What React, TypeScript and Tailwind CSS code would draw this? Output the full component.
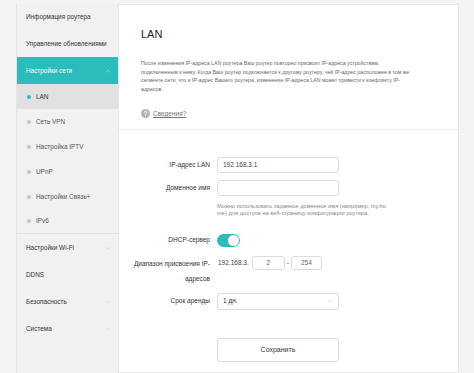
import { ChevronDown, ChevronUp } from 'lucide-react';

const font = { fontFamily: '"Liberation Sans", Arial, sans-serif' };

interface NavItem {
  label: string;
  kind: 'top' | 'open' | 'sub' | 'active';
  chevron?: boolean;
}

const nav: NavItem[] = [
  { label: 'Информация роутера', kind: 'top' },
  { label: 'Управление обновлениями', kind: 'top' },
  { label: 'Настройки сети', kind: 'open', chevron: true },
  { label: 'LAN', kind: 'active' },
  { label: 'Сеть VPN', kind: 'sub' },
  { label: 'Настройка IPTV', kind: 'sub' },
  { label: 'UPnP', kind: 'sub' },
  { label: 'Настройки Связь+', kind: 'sub' },
  { label: 'IPv6', kind: 'sub' },
  { label: 'Настройки Wi-Fi', kind: 'top', chevron: true },
  { label: 'DDNS', kind: 'top' },
  { label: 'Безопасность', kind: 'top', chevron: true },
  { label: 'Система', kind: 'top', chevron: true },
];

function Sidebar() {
  return (
    <div className="w-[102px] shrink-0 bg-[#f1f1f1] border-l border-[#e4e4e4] flex flex-col">
      {nav.map((item, i) => {
        if (item.kind === 'open') {
          return (
            <div key={i} className="h-[27px] bg-[#2cbcbc] flex items-center justify-between pl-[9px] pr-[6px] text-[6.4px] text-white whitespace-nowrap">
              <span>{item.label}</span>
              <ChevronUp size={8} strokeWidth={1.5} className="text-[#bfeaea]" />
            </div>
          );
        }
        if (item.kind === 'sub' || item.kind === 'active') {
          const active = item.kind === 'active';
          return (
            <div key={i} className={`h-[25px] flex items-center pl-[10px] text-[6.4px] whitespace-nowrap ${active ? 'bg-[#e1e1e1] text-[#333]' : 'text-[#555]'} ${item.label === 'IPv6' ? 'border-b border-[#e2e2e2]' : ''}`}>
              <span className="w-[4px] h-[4px] rounded-full mr-[5px] shrink-0" style={{ background: active ? '#2cbcbc' : '#c4c4c4' }} />
              <span>{item.label}</span>
            </div>
          );
        }
        return (
          <div key={i} className={`${i === 0 ? 'h-[26px]' : 'h-[27px]'} flex items-center justify-between pl-[9px] pr-[6px] text-[6.4px] text-[#333] whitespace-nowrap`}>
            <span>{item.label}</span>
            {item.chevron && <ChevronDown size={8} strokeWidth={1.2} className="text-[#c8c8c8]" />}
          </div>
        );
      })}
    </div>
  );
}

function Field({ label, children, className = '' }: { label: string; children: React.ReactNode; className?: string }) {
  return (
    <div className={`flex items-center ${className}`}>
      <div className="w-[91px] text-right text-[6.5px] text-[#333] whitespace-nowrap">{label}</div>
      <div className="ml-[7px] flex items-center">{children}</div>
    </div>
  );
}

export default function App() {
  return (
    <div className="w-[474px] h-[373px] bg-[#f4f4f4] flex pl-[16px] pt-[4px] overflow-hidden" style={font}>
      <Sidebar />
      <div className="w-[341px] shrink-0 bg-white border border-[#e6e6e6] flex flex-col">
        <div className="pl-[22px] pr-[20px] pt-[22px] pb-[10px] border-b border-[#ececec]">
          <div className="text-[11px] leading-[14px] text-[#222]">LAN</div>
          <p className="mt-[18px] text-[5.25px] leading-[8.7px] text-[#666] whitespace-nowrap">
            После изменения IP-адреса LAN роутера Ваш роутер повторно присвоит IP-адреса устройствам,
            <br />
            подключенным к нему. Когда Ваш роутер подключается к другому роутеру, чей IP-адрес расположен в том же
            <br />
            сегменте сети, что и IP-адрес Вашего роутера, изменение IP-адреса LAN может привести к конфликту IP-
            <br />
            адресов.
          </p>
          <div className="mt-[15px] flex items-center h-[10px]">
            <svg width="9" height="9" viewBox="0 0 9 9" className="shrink-0">
              <circle cx="4.5" cy="4.5" r="4.5" fill="#b3b3b3" />
              <path d="M3.2 3.4a1.3 1.3 0 1 1 1.8 1.2c-.4.2-.5.4-.5.8" stroke="#fff" strokeWidth="0.9" fill="none" strokeLinecap="round" />
              <circle cx="4.5" cy="6.7" r="0.5" fill="#fff" />
            </svg>
            <span className="ml-[3px] text-[6.5px] text-[#777] underline">Сведения?</span>
          </div>
        </div>

        <div className="flex flex-col">
          <Field label="IP-адрес LAN" className="mt-[27px]">
            <div className="w-[122px] h-[16px] rounded-[3px] border border-[#dcdcdc] flex items-center px-[5px] text-[6.5px] text-[#444]">
              192.168.3.1
            </div>
          </Field>
          <Field label="Доменное имя" className="mt-[7px]">
            <div className="w-[122px] h-[16px] rounded-[3px] border border-[#dcdcdc]" />
          </Field>
          <div className="ml-[98px] mt-[7px] text-[5.7px] leading-[7.5px] text-[#888] whitespace-nowrap">
            Можно использовать заданное доменное имя (например, my.ho
            <br />
            me) для доступа на веб-страницу конфигурации роутера.
          </div>
          <Field label="DHCP-сервер" className="mt-[16px]">
            <div className="w-[23px] h-[13px] rounded-full bg-[#2cbcbc] flex items-center justify-end pr-[1px]">
              <div className="w-[11px] h-[11px] rounded-full bg-white" />
            </div>
          </Field>
          <div className="flex items-start mt-[9px]">
            <div className="w-[91px] text-right text-[6.5px] leading-[15px] text-[#333] whitespace-nowrap">
              Диапазон присвоения IP-
              <br />
              адресов
            </div>
            <div className="ml-[8px] h-[15px] flex items-center text-[6.5px] text-[#444]">
              <span>192.168.3.</span>
              <div className="ml-[3px] w-[33px] h-[14px] rounded-[3px] border border-[#dcdcdc] flex items-center justify-center text-[6.5px] text-[#666]">2</div>
              <span className="mx-[2px]">-</span>
              <div className="w-[31px] h-[14px] rounded-[3px] border border-[#dcdcdc] flex items-center justify-center text-[6.5px] text-[#666]">254</div>
            </div>
          </div>
          <Field label="Срок аренды" className="mt-[7px]">
            <div className="w-[122px] h-[17px] rounded-[3px] border border-[#dcdcdc] flex items-center justify-between pl-[5px] pr-[4px] text-[6.5px] text-[#333]">
              <span>1 дн.</span>
              <ChevronDown size={8} strokeWidth={1.2} className="text-[#bbb]" />
            </div>
          </Field>
          <div className="ml-[98px] mt-[28px] w-[122px] h-[24px] rounded-[3px] border border-[#dcdcdc] flex items-center justify-center text-[7px] text-[#333]">
            Сохранить
          </div>
        </div>
      </div>
    </div>
  );
}
